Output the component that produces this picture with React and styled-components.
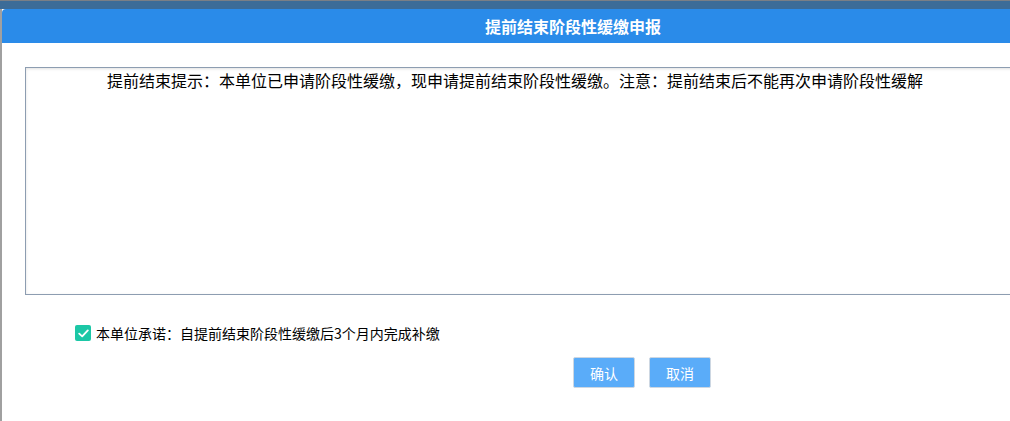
import React, { useState } from "react";
import styled, { createGlobalStyle } from "styled-components";

const GlobalStyle = createGlobalStyle`
  html, body {
    margin: 0;
    padding: 0;
    background: #ffffff;
    overflow: hidden;
  }
  body {
    font-family: "Noto Sans CJK SC", "Microsoft YaHei", sans-serif;
  }
`;

const Page = styled.div`
  width: 1010px;
  height: 421px;
  display: flex;
  flex-direction: column;
  overflow: hidden;
`;

const TopMask = styled.div`
  height: 8px;
  flex: none;
  background: #3c6c98;
  border-top: 1px solid #7a7f86;
`;

const Row = styled.div`
  flex: 1;
  display: flex;
  min-height: 0;
`;

const LeftEdge = styled.div`
  width: 2px;
  flex: none;
  background: #a0a0a0;
`;

const Dialog = styled.div`
  width: 1142px;
  flex: none;
  background: #ffffff;
  border-top-left-radius: 4px;
  overflow: hidden;
  display: flex;
  flex-direction: column;
`;

const Header = styled.div`
  height: 34px;
  background: #2a8be9;
  color: #ffffff;
  font-size: 16px;
  font-weight: bold;
  display: flex;
  align-items: center;
  justify-content: center;
`;

const Body = styled.div`
  padding: 24px 0 0 23px;
  display: flex;
  flex-direction: column;
`;

const Notice = styled.div`
  width: 1100px;
  height: 224px;
  box-sizing: content-box;
  border: 1px solid #8d9db1;
  box-shadow: inset 0 1px 3px rgba(0, 0, 0, 0.12);
  padding: 2px 0 0 81px;
  font-size: 16px;
  line-height: 20px;
  color: #000000;
  white-space: nowrap;
`;

const Promise = styled.label`
  margin: 30px 0 0 50px;
  display: flex;
  align-items: center;
  gap: 5px;
  font-size: 14px;
  line-height: 16px;
  color: #000000;
  cursor: pointer;
`;

const Box = styled.span`
  width: 16px;
  height: 16px;
  border-radius: 2px;
  background: ${(p) => (p.checked ? "#1cc7a6" : "#ffffff")};
  border: ${(p) => (p.checked ? "none" : "1px solid #b0b0b0")};
  box-sizing: border-box;
  display: flex;
  align-items: center;
  justify-content: center;
`;

const Actions = styled.div`
  margin: 16px 0 0 548px;
  display: flex;
  gap: 14px;
`;

const Button = styled.button`
  width: 62px;
  height: 31px;
  background: #5aacf9;
  border: 1px solid #cdd7e2;
  border-radius: 2px;
  color: #ffffff;
  font-family: inherit;
  font-size: 14px;
  padding: 0;
  cursor: pointer;
`;

export default function App() {
  const [checked, setChecked] = useState(true);
  return (
    <>
      <GlobalStyle />
      <Page>
        <TopMask />
        <Row>
          <LeftEdge />
          <Dialog>
            <Header>提前结束阶段性缓缴申报</Header>
            <Body>
              <Notice>
                提前结束提示：本单位已申请阶段性缓缴，现申请提前结束阶段性缓缴。注意：提前结束后不能再次申请阶段性缓解
              </Notice>
              <Promise onClick={() => setChecked(!checked)}>
                <Box checked={checked}>
                  {checked && (
                    <svg width="11" height="9" viewBox="0 0 11 9">
                      <path
                        d="M1.2 4.6 L4.2 7.4 L9.8 1.4"
                        fill="none"
                        stroke="#ffffff"
                        strokeWidth="1.8"
                        strokeLinecap="round"
                        strokeLinejoin="round"
                      />
                    </svg>
                  )}
                </Box>
                本单位承诺：自提前结束阶段性缓缴后3个月内完成补缴
              </Promise>
              <Actions>
                <Button>确认</Button>
                <Button>取消</Button>
              </Actions>
            </Body>
          </Dialog>
        </Row>
      </Page>
    </>
  );
}
